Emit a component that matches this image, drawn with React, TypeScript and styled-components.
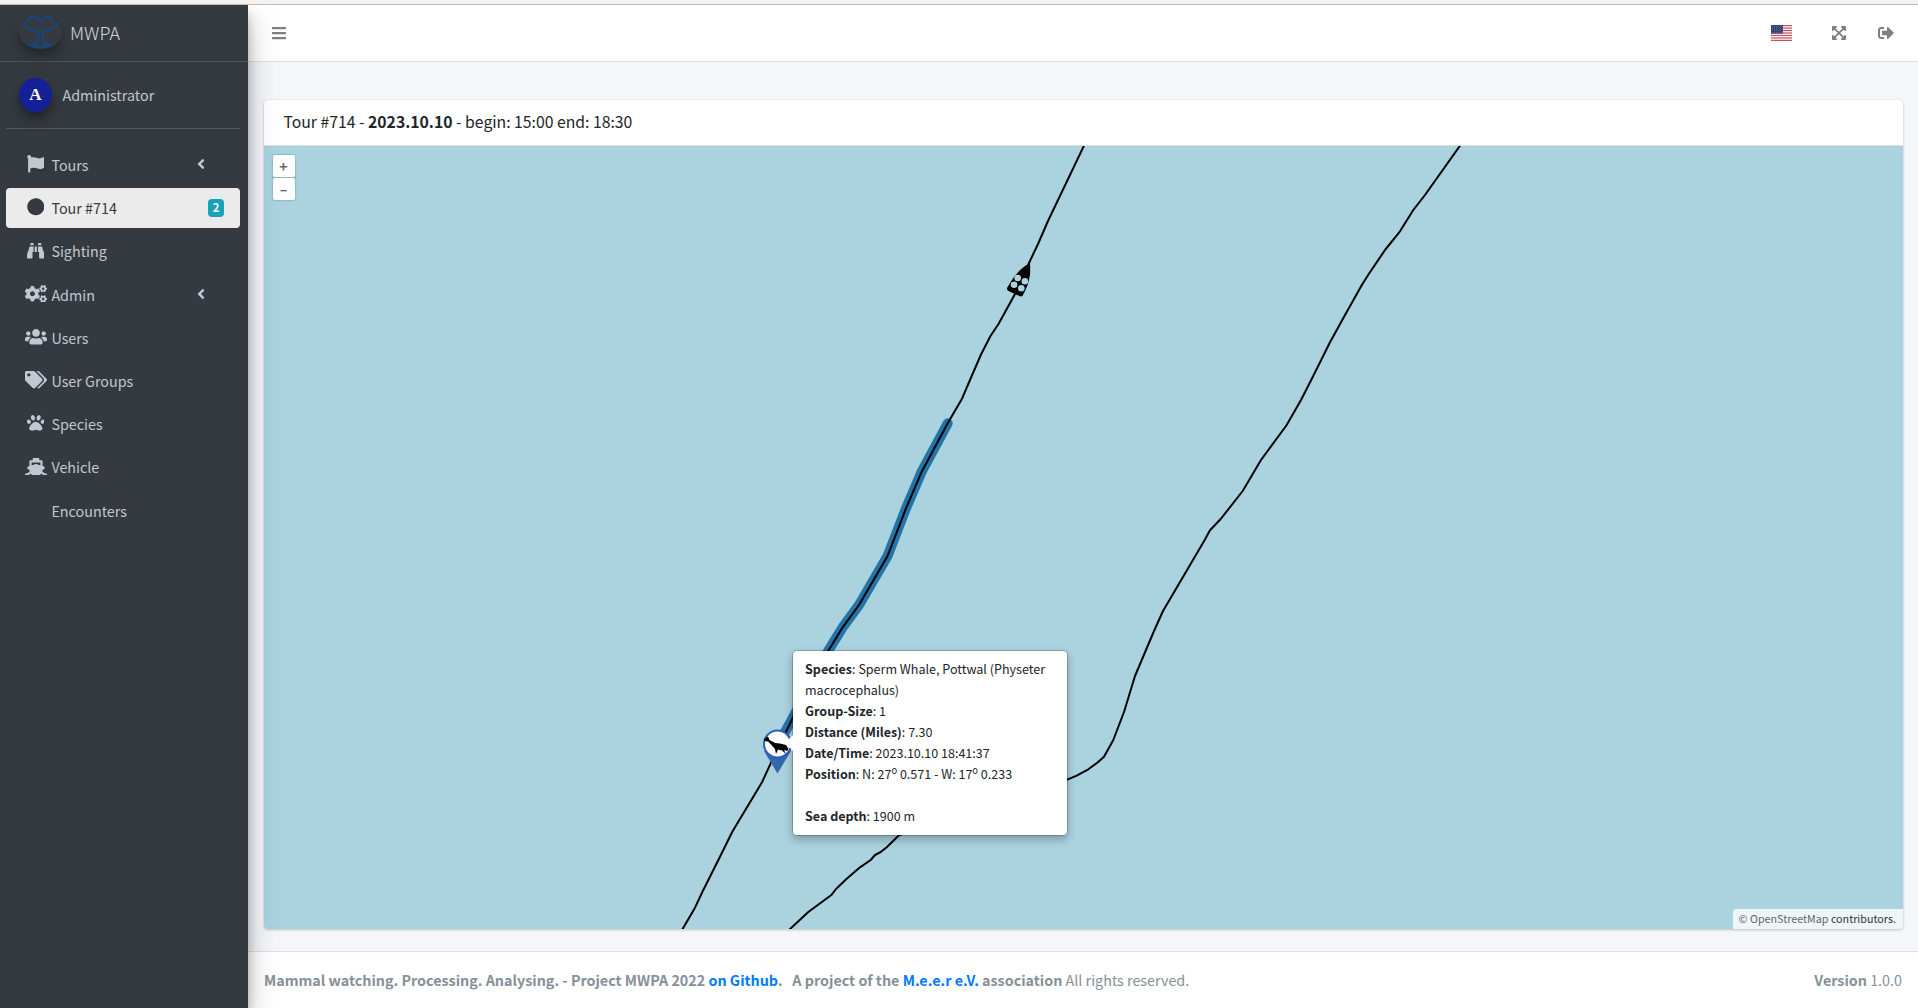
import React from 'react';
import styled, { createGlobalStyle, css } from 'styled-components';
import {
  FaAngleLeft,
  FaBars,
  FaBinoculars,
  FaCircle,
  FaCogs,
  FaExpandArrowsAlt,
  FaFlag,
  FaPaw,
  FaShip,
  FaSignOutAlt,
  FaTags,
  FaUsers,
} from 'react-icons/fa';

// The Latin glyphs of this family are drawn larger than their nominal size.
const fs = (px: number) => `${(px * 0.8957).toFixed(3)}px`;

const GlobalStyle = createGlobalStyle`
  *, *::before, *::after { box-sizing: border-box; }
  body {
    margin: 0;
    font-family: "Noto Sans CJK SC", "Noto Sans", sans-serif;
    font-size: ${fs(16)};
    line-height: 24px;
    color: #212529;
    background: #f4f6f9;
  }
  a { color: #007bff; text-decoration: none; }
`;

const Page = styled.div`
  height: 1008px;
  display: flex;
  flex-direction: column;
  overflow: hidden;
`;

const TopEdge = styled.div`
  flex: none;
  height: 5px;
  background: #f3f2f0;
  border-bottom: 1px solid #c4bcb0;
`;

const Wrapper = styled.div`
  flex: 1;
  display: flex;
  min-height: 0;
`;

const Sidebar = styled.aside`
  position: relative;
  z-index: 2;
  width: 248px;
  flex: none;
  background: #343a40;
  color: #c2c7d0;
  clip-path: inset(0 -60px 0 0);
  box-shadow: 0 14px 28px rgba(0, 0, 0, 0.25), 0 10px 10px rgba(0, 0, 0, 0.22);
`;

const elevated = css`
  box-shadow: 0 10px 20px rgba(0, 0, 0, 0.19), 0 6px 6px rgba(0, 0, 0, 0.23);
`;

const Brand = styled.a`
  display: flex;
  align-items: center;
  height: 57px;
  padding: 0 0 2px 19px;
  gap: 8px;
  border-bottom: 1px solid #4b545c;
  font-size: ${fs(20)};
  font-weight: 300;
  color: rgba(255, 255, 255, 0.8);
`;

const BrandLogo = styled.span`
  width: 43px;
  height: 33px;
  border-radius: 50%;
  opacity: 0.8;
  ${elevated}
  svg { display: block; }
`;

const UserPanel = styled.div`
  display: flex;
  align-items: center;
  gap: 10.5px;
  height: 67px;
  margin: 0 8px 0 6px;
  padding: 0 0 0 13px;
  border-bottom: 1px solid #4f5962;
`;

const Avatar = styled.span`
  display: grid;
  place-items: center;
  width: 33px;
  height: 34px;
  border-radius: 50%;
  background: #142096;
  color: #fff;
  font: bold 17px "Liberation Serif", serif;
  ${elevated}
`;

const Nav = styled.nav`
  display: flex;
  flex-direction: column;
  gap: 3.2px;
  margin: 16px 8px 0 6px;
`;

const NavLink = styled.a<{ $active?: boolean }>`
  display: flex;
  align-items: center;
  height: 40px;
  padding: 0 16px;
  border-radius: 4px;
  color: ${(p) => (p.$active ? '#343a40' : '#c2c7d0')};
  background: ${(p) => (p.$active ? 'rgba(255,255,255,0.9)' : 'transparent')};
`;

const NavIcon = styled.span<{ $wide?: boolean }>`
  display: flex;
  justify-content: center;
  width: 25.6px;
  margin: -2px 3px 0 0.8px;
  font-size: 17.6px;
  svg {
    flex: none;
    width: ${(p) => (p.$wide ? '1.25em' : '1em')};
    height: 1em;
  }
`;

const NavLabel = styled.span`
  flex: 1;
`;

const Caret = styled.span`
  display: flex;
  margin: -2px 19px 0 0;
  font-size: 16px;
  svg {
    width: 0.5em;
    height: 1em;
  }
`;

const Badge = styled.span`
  width: 16px;
  height: 18px;
  border-radius: 4px;
  background: #17a2b8;
  color: #fff;
  font-size: ${fs(12.6)};
  font-weight: 700;
  line-height: 17px;
  text-align: center;
`;

const Main = styled.div`
  flex: 1;
  min-width: 0;
  display: flex;
  flex-direction: column;
`;

const Navbar = styled.header`
  display: flex;
  align-items: center;
  height: 57px;
  flex: none;
  padding: 0 24px;
  background: #fff;
  border-bottom: 1px solid #dee2e6;
  color: rgba(0, 0, 0, 0.5);
  font-size: 16px;
  svg { display: block; }
`;

const NavbarRight = styled.div`
  display: flex;
  align-items: center;
  margin-left: auto;
`;

const FlagButton = styled.span`
  margin-right: 40px;
`;

const ToolButton = styled.span<{ $width: number }>`
  svg {
    width: ${(p) => p.$width}px;
    height: 16px;
  }
  & + & { margin-left: 32px; }
`;

const Content = styled.main`
  flex: 1;
  min-height: 0;
  display: flex;
  padding: 38px 15px 22px 16px;
`;

const Card = styled.section`
  flex: 1;
  display: flex;
  flex-direction: column;
  min-width: 0;
  overflow: hidden;
  border-radius: 4px;
  background: #fff;
  box-shadow: 0 0 1px rgba(0, 0, 0, 0.125), 0 1px 3px rgba(0, 0, 0, 0.2);
`;

const CardHeader = styled.h3`
  flex: none;
  height: 46px;
  margin: 0;
  padding: 0 19.5px;
  border-bottom: 1px solid rgba(0, 0, 0, 0.125);
  font-size: ${fs(17.6)};
  font-weight: 400;
  line-height: 43px;
`;

const MapView = styled.div`
  position: relative;
  flex: 1;
  overflow: hidden;
  background: #aad3df;
`;

const Tracks = styled.svg`
  position: absolute;
  left: 0;
  top: 0;
`;

const ZoomControl = styled.div`
  position: absolute;
  left: 9px;
  top: 9px;
  display: grid;
  gap: 1px;
  border-radius: 3px;
  box-shadow: 0 0 2px rgba(60, 110, 130, 0.8);
  background: #92b8c4;
`;

const ZoomButton = styled.button`
  width: 22px;
  height: 22px;
  padding: 0 1px 0 0;
  border: 0;
  border-radius: 2px;
  background: #fff;
  color: #666;
  font: 700 14px/21px "Noto Sans CJK SC", sans-serif;
`;

const Popover = styled.div`
  position: absolute;
  left: 528px;
  top: 504px;
  width: 276px;
  height: 186px;
  padding: 7px 12px 8px;
  border: 1px solid rgba(0, 0, 0, 0.2);
  border-radius: 5px;
  background: #fff;
  background-clip: padding-box;
  box-shadow: 0 4px 8px rgba(0, 0, 0, 0.25);
  font-size: ${fs(14)};
  line-height: 21px;
  sup {
    position: relative;
    top: -0.5em;
    font-size: 75%;
    line-height: 0;
    vertical-align: baseline;
  }
  &::before {
    content: '';
    position: absolute;
    left: -8px;
    top: 84px;
    border: solid transparent;
    border-width: 8px 8px 8px 0;
    border-right-color: #fff;
  }
`;

const Attribution = styled.div`
  position: absolute;
  right: 0;
  bottom: 0;
  height: 20px;
  padding: 0 7px 0 6px;
  border-radius: 4px 0 0;
  background: rgba(255, 255, 255, 0.8);
  font-size: ${fs(12)};
  line-height: 19px;
  color: #333;
  white-space: nowrap;
  a { color: #666; }
`;

const Footer = styled.footer`
  flex: none;
  display: flex;
  justify-content: space-between;
  height: 57px;
  padding: 16px 16px 0;
  border-top: 1px solid #dee2e6;
  background: #fff;
  color: #869099;
  white-space: pre;
`;

const items: {
  label: string;
  icon?: React.ReactNode;
  wide?: boolean;
  caret?: boolean;
  badge?: string;
  active?: boolean;
}[] = [
  { label: 'Tours', icon: <FaFlag />, caret: true },
  { label: 'Tour #714', icon: <FaCircle />, badge: '2', active: true },
  { label: 'Sighting', icon: <FaBinoculars /> },
  { label: 'Admin', icon: <FaCogs />, wide: true, caret: true },
  { label: 'Users', icon: <FaUsers />, wide: true },
  { label: 'User Groups', icon: <FaTags />, wide: true },
  { label: 'Species', icon: <FaPaw /> },
  { label: 'Vehicle', icon: <FaShip />, wide: true },
  { label: 'Encounters' },
];

const details: [string, React.ReactNode][] = [
  ['Species', 'Sperm Whale, Pottwal (Physeter macrocephalus)'],
  ['Group-Size', '1'],
  ['Distance (Miles)', '7.30'],
  ['Date/Time', '2023.10.10 18:41:37'],
  ['Position', <>N: 27<sup>o</sup> 0.571 - W: 17<sup>o</sup> 0.233</>],
];

const FlukeLogo = () => (
  <svg width="43" height="33" viewBox="0 0 43 33" fill="none" stroke="#10499a" strokeWidth="2" strokeLinecap="round">
    <path d="M9 4C12 .5 17 0 21.700 5.500C26.500 0 31 .5 34 4" />
    <path d="M4.500 7C6 10 7.500 12 10 12.700C14 13.500 17 13 18.500 15C19.700 17 20 18.500 19.500 21C19 25 18.300 26.500 16.500 28C14 29 11.500 28.500 10.500 29.500C13 31 15 29 17.500 30C19.500 31 20 32 21.700 32C23.500 32 24 31 26 30C28.500 29 30 31 32.500 29.500C31.500 28.500 29.500 29 27 28C25.200 26.500 24.500 25 24 21C23.500 18.500 23.700 17 25 15C26.500 13 29.500 13.500 33 12.700C35.500 12 37 10 38.300 7" />
  </svg>
);

const UsFlag = () => (
  <svg width="21" height="16" viewBox="0 0 21 16">
    <rect width="21" height="16" fill="#fff" />
    {[0, 1, 2, 3, 4, 5, 6].map((i) => (
      <rect key={i} y={(i * 32) / 13} width="21" height={16 / 13} fill="#c8505f" />
    ))}
    <rect width="12" height="8.6" fill="#34446f" />
    {[1.5, 3.5, 5.5, 7.5].map((y) => (
      <path key={y} d={`M1 ${y}H12`} stroke="#6f7ba0" strokeWidth=".7" strokeDasharray="1 1" />
    ))}
  </svg>
);

const MapTracks = () => (
  <Tracks width="1639" height="783" viewBox="264 146 1639 783" fill="none">
    <path
      d="M947.700 423.300L921.700 471.700L906 508.300L887.700 555.700L859 605L842.700 627.300L828.300 650.700L792.700 718L775 750"
      stroke="#2474a8"
      strokeWidth="10"
      strokeLinecap="round"
      strokeLinejoin="round"
    />
    <g stroke="#000" strokeWidth="2" strokeLinejoin="round">
      <path d="M1084.300 145L1048 221L1038 244L1029 263L1015 294L998.500 324L990.500 336L981 354.500L970 380L961.700 399.300L947.700 423.300L921.700 471.700L906 508.300L887.700 555.700L859 605L842.700 627.300L828.300 650.700L792.700 718L770.700 763.300L762.300 781.700L732.300 831.700L720 856.700L701.700 893.300L695 907.700L682 930" />
      <path d="M1460.500 145L1425 195L1413.300 210L1400 231.300L1385 250L1368.300 274.700L1361.700 285.300L1346 313.300L1330 342.300L1311.700 379L1301 400L1286.700 425L1261 460L1242.700 491L1220.700 519L1210 530.300L1204.700 540L1163 611L1154 631L1135 676L1124 712L1113.300 740L1104 756.700L1097.300 762.700L1088.300 769.300L1076.700 775.700L1067.300 779.700L1000 800L899 835.300L886.700 847.300L880.700 852L875 855L870.700 860L860 867.300L846.700 878.700L836 889L831.700 894.700L808.300 912L789 930" />
    </g>
    <path d="M1029.500 263.500C1022 267 1015 274 1007 288Q1006.500 290 1008.500 291L1020 296.300Q1022 297 1023 295C1029 284 1031 275 1030 264Z" fill="#000" />
    <g fill="#aad3df">
      <circle cx="1017.700" cy="278" r="3.300" />
      <circle cx="1024.900" cy="281.300" r="3.300" />
      <circle cx="1014.100" cy="284.700" r="3.300" />
      <circle cx="1021.300" cy="288.200" r="3.300" />
    </g>
    <path d="M764 751L777.500 773.500L791 751Z" fill="#3366aa" />
    <circle cx="777.500" cy="744" r="13.500" fill="#fff" stroke="#2d60b8" strokeWidth="2" />
    <path d="M764 739L768 736.500L769.500 740L775 743L780 743.500L786 745L788.500 749L787 751L784 750L786 754L782 750.500L778 749.500L776 754L775 749L771 744.500L768 741.500L764 741Z" fill="#000" />
  </Tracks>
);

export default function App() {
  return (
    <Page>
      <GlobalStyle />
      <TopEdge />
      <Wrapper>
        <Sidebar>
          <Brand>
            <BrandLogo><FlukeLogo /></BrandLogo>
            MWPA
          </Brand>
          <UserPanel>
            <Avatar>A</Avatar>
            Administrator
          </UserPanel>
          <Nav>
            {items.map((item) => (
              <NavLink key={item.label} $active={item.active}>
                <NavIcon $wide={item.wide}>{item.icon}</NavIcon>
                <NavLabel>{item.label}</NavLabel>
                {item.caret && <Caret><FaAngleLeft /></Caret>}
                {item.badge && <Badge>{item.badge}</Badge>}
              </NavLink>
            ))}
          </Nav>
        </Sidebar>
        <Main>
          <Navbar>
            <ToolButton $width={14}><FaBars /></ToolButton>
            <NavbarRight>
              <FlagButton><UsFlag /></FlagButton>
              <ToolButton $width={14}><FaExpandArrowsAlt /></ToolButton>
              <ToolButton $width={16}><FaSignOutAlt /></ToolButton>
            </NavbarRight>
          </Navbar>
          <Content>
            <Card>
              <CardHeader>
                Tour #714 - <b>2023.10.10</b> - begin: 15:00 end: 18:30
              </CardHeader>
              <MapView>
                <MapTracks />
                <ZoomControl>
                  <ZoomButton>+</ZoomButton>
                  <ZoomButton>–</ZoomButton>
                </ZoomControl>
                <Popover>
                  {details.map(([name, value]) => (
                    <div key={name}><b>{name}</b>: {value}</div>
                  ))}
                  <br />
                  <div><b>Sea depth</b>: 1900 m</div>
                </Popover>
                <Attribution><a>© OpenStreetMap</a> contributors.</Attribution>
              </MapView>
            </Card>
          </Content>
          <Footer>
            <span>
              <b>Mammal watching. Processing. Analysing. - Project MWPA 2022 <a>on Github</a>.{'\u00a0\u00a0 '}A project of the <a>M.e.e.r e.V.</a> association</b> All rights reserved.
            </span>
            <span><b>Version</b> 1.0.0</span>
          </Footer>
        </Main>
      </Wrapper>
    </Page>
  );
}
